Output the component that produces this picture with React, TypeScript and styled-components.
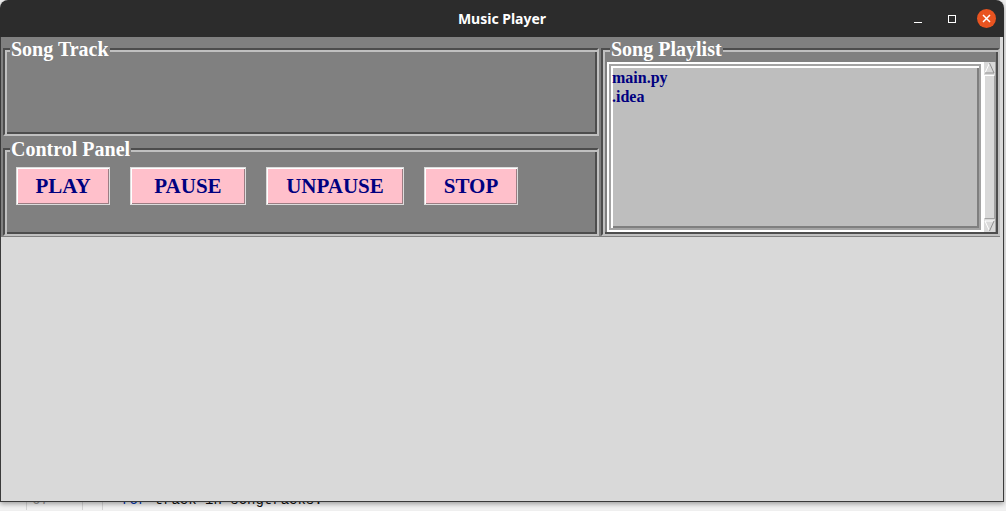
import styled, { createGlobalStyle } from "styled-components";

const GlobalStyle = createGlobalStyle`
  html, body {
    margin: 0;
    padding: 0;
  }
  body {
    width: 1006px;
    height: 511px;
    overflow: hidden;
    background: #efefef;
  }
`;

const Desktop = styled.div`
  position: relative;
  width: 1006px;
  height: 511px;
  overflow: hidden;
  background: #efefef;
`;

const Window = styled.div`
  position: relative;
  z-index: 1;
  width: 1004px;
  display: flex;
  flex-direction: column;
  border-radius: 8px 8px 0 0;
  overflow: hidden;
  box-shadow: 0 2px 5px rgba(0, 0, 0, 0.35);
`;

const TitleBar = styled.div`
  height: 37px;
  background: #2c2c2c;
  display: grid;
  grid-template-columns: 1fr auto 1fr;
  align-items: center;
`;

const Title = styled.div`
  grid-column: 2;
  color: #ffffff;
  font-family: "Noto Sans", "DejaVu Sans", sans-serif;
  font-weight: 700;
  font-size: 14px;
`;

const Controls = styled.div`
  grid-column: 3;
  justify-self: end;
  display: flex;
  padding-right: 1px;
`;

const Ctl = styled.div`
  width: 34px;
  height: 37px;
  display: flex;
  align-items: center;
  justify-content: center;
`;

const CloseDot = styled.div`
  width: 19px;
  height: 19px;
  border-radius: 50%;
  background: #e95420;
  display: flex;
  align-items: center;
  justify-content: center;
`;

const Body = styled.div`
  height: 465px;
  box-sizing: border-box;
  background: #d9d9d9;
  border: 1px solid #3a3a3a;
  border-top: none;
`;

const TopRow = styled.div`
  display: grid;
  grid-template-columns: 600px 399px;
  height: 200px;
`;

const Column = styled.div`
  display: flex;
  flex-direction: column;
`;

const LabelFrame = styled.div<{ $pad: string; $h: number }>`
  position: relative;
  box-sizing: border-box;
  height: ${(p) => p.$h}px;
  padding: ${(p) => p.$pad};
  background: #808080;
  display: flex;
  flex-direction: column;
`;

const Legend = styled.span`
  position: absolute;
  top: 1px;
  left: 9px;
  padding: 0 1px;
  background: #808080;
  color: #ffffff;
  font-family: "Liberation Serif", "Times New Roman", serif;
  font-weight: 700;
  font-size: 20px;
  line-height: 22px;
  white-space: nowrap;
`;

const Groove = styled.div`
  flex: 1;
  display: flex;
  border: 2px solid;
  border-color: #4d4d4d #c0c0c0 #c0c0c0 #4d4d4d;
  box-shadow: inset 2px 2px 0 #c0c0c0, inset -2px -2px 0 #4d4d4d;
`;

const GrooveInner = styled.div<{ $pad: string }>`
  flex: 1;
  display: flex;
  align-items: flex-start;
  margin: 2px;
  padding: ${(p) => p.$pad};
`;

const ButtonRow = styled.div`
  display: flex;
  gap: 20px;
`;

const Btn = styled.button<{ $w: number }>`
  width: ${(p) => p.$w}px;
  height: 38px;
  box-sizing: border-box;
  padding: 0;
  background: #ffc0cb;
  color: #000080;
  border: 1px solid #dcdcdc;
  box-shadow: inset 1px 1px 0 #ffffff, inset -1px -1px 0 #9c7d83;
  font-family: "Liberation Serif", "Times New Roman", serif;
  font-weight: 700;
  font-size: 21px;
  cursor: pointer;
`;

const Listbox = styled.div`
  flex: 1;
  align-self: stretch;
  box-sizing: border-box;
  border: 2px solid #ffffff;
  box-shadow: inset 0 0 0 2px #a3a3a3, inset 4px 4px 0 #ffffff,
    inset -4px -4px 0 #7f7f7f;
  background: #bebebe;
  padding: 4px 3px;
`;

const ListItem = styled.div`
  color: #000080;
  font-family: "Liberation Serif", "Times New Roman", serif;
  font-weight: 700;
  font-size: 16px;
  line-height: 19px;
`;

const Scrollbar = styled.div`
  width: 13px;
  align-self: stretch;
  box-sizing: border-box;
  background: #d9d9d9;
  border-left: 1px solid #ffffff;
  border-right: 1px solid #a3a3a3;
  display: flex;
  flex-direction: column;
`;

const Thumb = styled.div`
  flex: 1;
  margin: 1px 0;
  border: 1px solid;
  border-color: #ffffff #a3a3a3 #a3a3a3 #ffffff;
`;

const Editor = styled.div`
  display: flex;
  height: 20px;
  margin-top: -12px;
  background: #f2f2f2;
  font-family: "Liberation Mono", "DejaVu Sans Mono", monospace;
  font-size: 14px;
  line-height: 20px;
`;

const Gutter = styled.div<{ $w: number }>`
  width: ${(p) => p.$w}px;
  flex: none;
  border-right: 1px solid #d4d4d4;
  color: #9a9a9a;
  padding-left: 5px;
  box-sizing: border-box;
`;

const Code = styled.div`
  padding-left: 18px;
  color: #111111;
  white-space: pre;
`;

const Kw = styled.span`
  color: #0033b3;
`;

function Arrow({ down }: { down?: boolean }) {
  return (
    <svg width="11" height="12" viewBox="0 0 11 12">
      {down ? (
        <>
          <polygon points="1,1 10,1 5.5,11" fill="#d9d9d9" />
          <line x1="1" y1="1" x2="10" y2="1" stroke="#ffffff" />
          <line x1="1" y1="1" x2="5.5" y2="11" stroke="#ffffff" />
          <line x1="10" y1="1" x2="5.5" y2="11" stroke="#8f8f8f" />
        </>
      ) : (
        <>
          <polygon points="5.5,1 10,11 1,11" fill="#d9d9d9" />
          <line x1="5.5" y1="1" x2="1" y2="11" stroke="#ffffff" />
          <line x1="5.5" y1="1" x2="10" y2="11" stroke="#8f8f8f" />
          <line x1="1" y1="11" x2="10" y2="11" stroke="#8f8f8f" />
        </>
      )}
    </svg>
  );
}

const buttons = [
  { label: "PLAY", w: 94 },
  { label: "PAUSE", w: 116 },
  { label: "UNPAUSE", w: 138 },
  { label: "STOP", w: 94 },
];

export default function App() {
  return (
    <Desktop>
      <GlobalStyle />
      <Window>
        <TitleBar>
          <Title>Music Player</Title>
          <Controls>
            <Ctl>
              <svg width="10" height="10" viewBox="0 0 10 10">
                <line x1="1" y1="8.5" x2="9" y2="8.5" stroke="#fff" />
              </svg>
            </Ctl>
            <Ctl>
              <svg width="10" height="10" viewBox="0 0 10 10">
                <rect x="1.5" y="1.5" width="7" height="7" fill="none" stroke="#fff" />
              </svg>
            </Ctl>
            <Ctl>
              <CloseDot>
                <svg width="9" height="9" viewBox="0 0 9 9">
                  <path d="M1 1L8 8M8 1L1 8" stroke="#fff" strokeWidth="1.5" />
                </svg>
              </CloseDot>
            </Ctl>
          </Controls>
        </TitleBar>

        <Body>
          <TopRow>
            <Column>
              <LabelFrame $h={100} $pad="11px 2px 1px 2px">
                <Legend>Song Track</Legend>
                <Groove>
                  <GrooveInner $pad="0" />
                </Groove>
              </LabelFrame>
              <LabelFrame $h={100} $pad="11px 2px 1px 2px">
                <Legend>Control Panel</Legend>
                <Groove>
                  <GrooveInner $pad="15px 0 0 9px">
                    <ButtonRow>
                      {buttons.map((b) => (
                        <Btn key={b.label} $w={b.w}>
                          {b.label}
                        </Btn>
                      ))}
                    </ButtonRow>
                  </GrooveInner>
                </Groove>
              </LabelFrame>
            </Column>

            <LabelFrame $h={200} $pad="11px 0 1px 0">
              <Legend>Song Playlist</Legend>
              <Groove>
                <GrooveInner $pad="10px 0 0 2px">
                  <Listbox>
                    <ListItem>main.py</ListItem>
                    <ListItem>.idea</ListItem>
                  </Listbox>
                  <Scrollbar>
                    <Arrow />
                    <Thumb />
                    <Arrow down />
                  </Scrollbar>
                </GrooveInner>
              </Groove>
            </LabelFrame>
          </TopRow>
        </Body>
      </Window>

      <Editor>
        <Gutter $w={27} />
        <Gutter $w={56}>67</Gutter>
        <Gutter $w={20} />
        <Code>
          <Kw>for</Kw> track in songtracks:
        </Code>
      </Editor>
    </Desktop>
  );
}
